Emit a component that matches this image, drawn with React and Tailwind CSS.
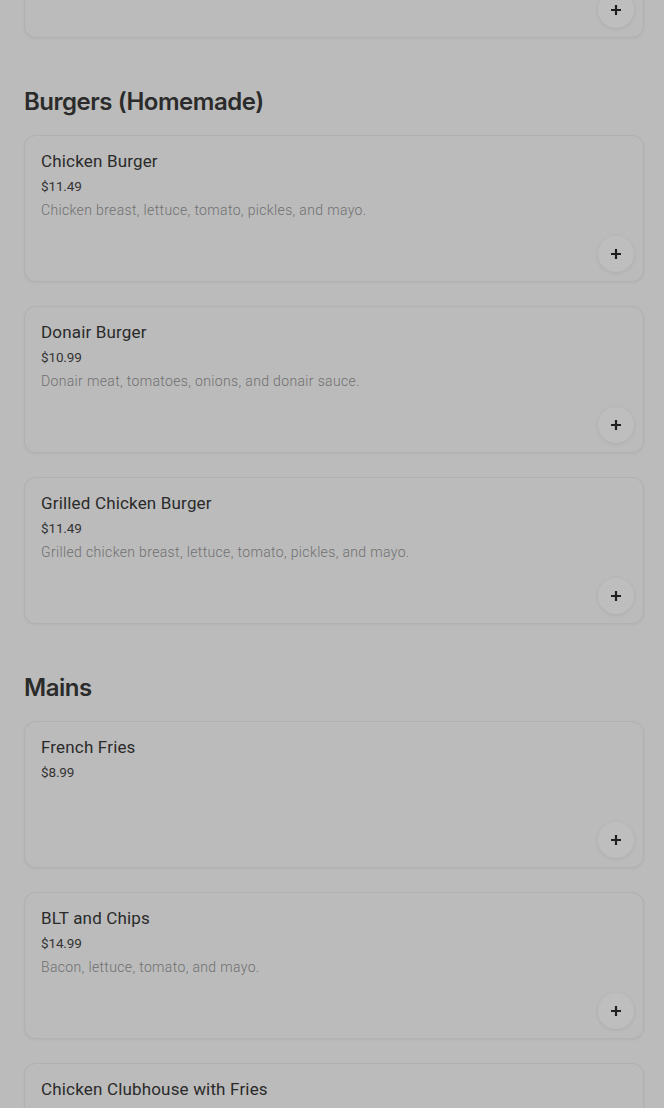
import React from 'react';

const sections = [
  {
    title: null,
    items: [{ name: 'Hidden Item', price: '$0.00', desc: '' }],
  },
  {
    title: 'Burgers (Homemade)',
    items: [
      { name: 'Chicken Burger', price: '$11.49', desc: 'Chicken breast, lettuce, tomato, pickles, and mayo.' },
      { name: 'Donair Burger', price: '$10.99', desc: 'Donair meat, tomatoes, onions, and donair sauce.' },
      { name: 'Grilled Chicken Burger', price: '$11.49', desc: 'Grilled chicken breast, lettuce, tomato, pickles, and mayo.' },
    ],
  },
  {
    title: 'Mains',
    items: [
      { name: 'French Fries', price: '$8.99', desc: '' },
      { name: 'BLT and Chips', price: '$14.99', desc: 'Bacon, lettuce, tomato, and mayo.' },
      { name: 'Chicken Clubhouse with Fries', price: '$16.99', desc: 'Chicken, bacon, lettuce, tomato, and mayo.' },
    ],
  },
];

function PlusIcon() {
  return (
    <svg width="12" height="12" viewBox="0 0 12 12" fill="none">
      <path d="M6 1v10M1 6h10" stroke="#1f1f1f" strokeWidth="2.2" />
    </svg>
  );
}

function ItemCard({ item, hidden }) {
  return (
    <div className="h-[147px] rounded-xl border border-[#b1b1b1] bg-[#bbbbbb] shadow-[0_1px_3px_rgba(0,0,0,0.05)] pl-4 pt-[14px] pb-[9px] pr-[9px] flex flex-col">
      <div className={hidden ? 'invisible' : ''}>
        <div className="text-[17px] leading-[22px] font-normal text-[#2a2a2a] tracking-[0.01em]">{item.name}</div>
        <div className="mt-[4px] text-[13.5px] leading-5 text-[#333333] tracking-[-0.01em]">{item.price}</div>
        {item.desc && <div className="mt-1 text-sm leading-5 font-light text-[#707070] tracking-[0.025em]">{item.desc}</div>}
      </div>
      <div className="mt-auto flex justify-end">
        <button className="w-9 h-9 rounded-full bg-[#bebebe] shadow-[0_1px_4px_rgba(0,0,0,0.08)] flex items-center justify-center">
          <PlusIcon />
        </button>
      </div>
    </div>
  );
}

export default function App() {
  return (
    <div className="h-[1108px] bg-[#bbbbbb] pl-6 pr-5 overflow-hidden" style={{ fontFamily: 'Roboto, "Noto Sans", sans-serif' }}>
      <div className="-mt-[109px]">
        {sections.map((section, si) => (
          <div key={si}>
            {section.title && (
              <h2
                className="mt-[48px] mb-[17px] text-2xl leading-8 font-semibold tracking-[-0.02em] text-[#2b2b2b]"
                style={{ fontFamily: 'Inter, sans-serif' }}
              >
                {section.title}
              </h2>
            )}
            <div className="flex flex-col gap-6">
              {section.items.map((item) => (
                <ItemCard key={item.name} item={item} hidden={!section.title} />
              ))}
            </div>
          </div>
        ))}
      </div>
    </div>
  );
}
